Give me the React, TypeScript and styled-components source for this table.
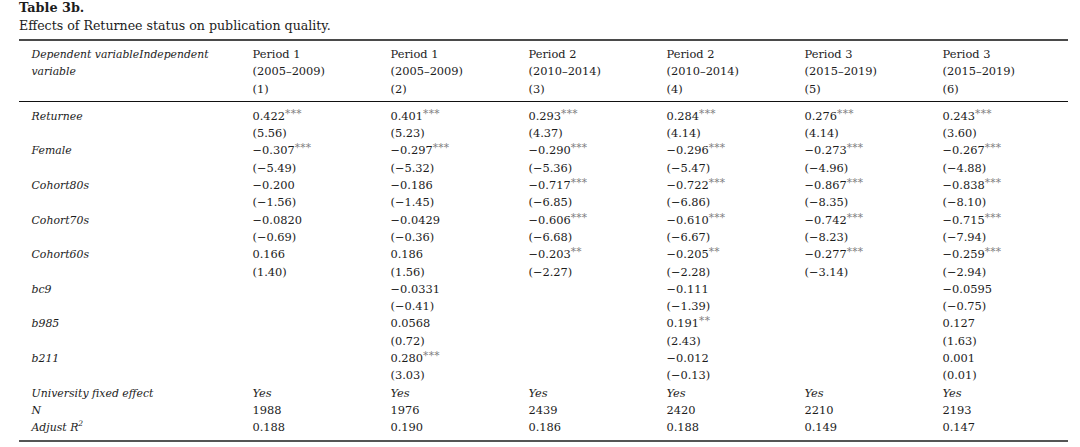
import React from "react";
import styled, { createGlobalStyle } from "styled-components";

const Global = createGlobalStyle`
  html, body { margin: 0; padding: 0; background: #fff; }
  body { font-family: "DejaVu Serif", serif; color: #1c1c1c; }
  *, *::before, *::after { box-sizing: border-box; }
`;

const Page = styled.div`
  padding: 0 12px 0 19px;
  width: 1080px;
`;

const Title = styled.div`
  font-weight: bold;
  font-size: 12.8px;
  line-height: 15px;
`;

const Caption = styled.div`
  font-size: 12.6px;
  line-height: 18px;
  margin-top: 2px;
`;

const Table = styled.table`
  margin-top: 4px;
  width: 1049px;
  border-collapse: collapse;
  border-top: 2px solid #4a4a4a;
  border-bottom: 2px solid #555;
  font-size: 11.4px;
  line-height: 17.3px;
  table-layout: fixed;
`;

const Col = styled.col<{ $first?: boolean }>`
  width: ${(p) => (p.$first ? "221px" : "138px")};
`;

const HeadRow = styled.tr`
  border-bottom: 1.5px solid #111;
`;

const Th = styled.th<{ $first?: boolean }>`
  text-align: left;
  font-weight: normal;
  font-style: ${(p) => (p.$first ? "italic" : "normal")};
  font-size: ${(p) => (p.$first ? "10.8px" : "11.4px")};
  vertical-align: top;
  padding: 5px 0 3px 12.5px;
  white-space: nowrap;
`;

const Td = styled.td<{ $label?: boolean; $top?: boolean; $bottom?: boolean }>`
  text-align: left;
  vertical-align: top;
  padding: ${(p) => (p.$top ? "6px" : "0")} 0 ${(p) => (p.$bottom ? "3px" : "0")} 12.5px;
  font-style: ${(p) => (p.$label ? "italic" : "normal")};
  font-size: ${(p) => (p.$label ? "10.9px" : "11.4px")};
  white-space: nowrap;
`;

const Line = styled.div`
  height: 17.3px;
`;

const Stars = styled.sup`
  color: #808080;
  font-size: 10.5px;
  vertical-align: 3px;
  line-height: 0;
  letter-spacing: 0.3px;
`;

const Sup = styled.sup`
  font-size: 7.5px;
  vertical-align: 5px;
  line-height: 0;
`;

const Yes = styled.span`
  font-style: italic;
`;

const headers: [string, string, string][] = [
  ["Period 1", "(2005–2009)", "(1)"],
  ["Period 1", "(2005–2009)", "(2)"],
  ["Period 2", "(2010–2014)", "(3)"],
  ["Period 2", "(2010–2014)", "(4)"],
  ["Period 3", "(2015–2019)", "(5)"],
  ["Period 3", "(2015–2019)", "(6)"],
];

const vars: { label: string; coef: string[]; t: string[] }[] = [
  {
    label: "Returnee",
    coef: ["0.422***", "0.401***", "0.293***", "0.284***", "0.276***", "0.243***"],
    t: ["(5.56)", "(5.23)", "(4.37)", "(4.14)", "(4.14)", "(3.60)"],
  },
  {
    label: "Female",
    coef: ["−0.307***", "−0.297***", "−0.290***", "−0.296***", "−0.273***", "−0.267***"],
    t: ["(−5.49)", "(−5.32)", "(−5.36)", "(−5.47)", "(−4.96)", "(−4.88)"],
  },
  {
    label: "Cohort80s",
    coef: ["−0.200", "−0.186", "−0.717***", "−0.722***", "−0.867***", "−0.838***"],
    t: ["(−1.56)", "(−1.45)", "(−6.85)", "(−6.86)", "(−8.35)", "(−8.10)"],
  },
  {
    label: "Cohort70s",
    coef: ["−0.0820", "−0.0429", "−0.606***", "−0.610***", "−0.742***", "−0.715***"],
    t: ["(−0.69)", "(−0.36)", "(−6.68)", "(−6.67)", "(−8.23)", "(−7.94)"],
  },
  {
    label: "Cohort60s",
    coef: ["0.166", "0.186", "−0.203**", "−0.205**", "−0.277***", "−0.259***"],
    t: ["(1.40)", "(1.56)", "(−2.27)", "(−2.28)", "(−3.14)", "(−2.94)"],
  },
  {
    label: "bc9",
    coef: ["", "−0.0331", "", "−0.111", "", "−0.0595"],
    t: ["", "(−0.41)", "", "(−1.39)", "", "(−0.75)"],
  },
  {
    label: "b985",
    coef: ["", "0.0568", "", "0.191**", "", "0.127"],
    t: ["", "(0.72)", "", "(2.43)", "", "(1.63)"],
  },
  {
    label: "b211",
    coef: ["", "0.280***", "", "−0.012", "", "0.001"],
    t: ["", "(3.03)", "", "(−0.13)", "", "(0.01)"],
  },
];

const Value = ({ v }: { v: string }) => {
  const m = v.match(/^(.*?)(\*+)$/);
  if (!m) return <>{v}</>;
  return (
    <>
      {m[1]}
      <Stars>{m[2]}</Stars>
    </>
  );
};

export default function App() {
  return (
    <Page>
      <Global />
      <Title>Table 3b.</Title>
      <Caption>Effects of Returnee status on publication quality.</Caption>
      <Table>
        <colgroup>
          <Col $first />
          {headers.map((_, i) => (
            <Col key={i} />
          ))}
        </colgroup>
        <thead>
          <HeadRow>
            <Th $first>
              Dependent variableIndependent
              <br />
              variable
            </Th>
            {headers.map((h, i) => (
              <Th key={i}>
                {h[0]}
                <br />
                {h[1]}
                <br />
                {h[2]}
              </Th>
            ))}
          </HeadRow>
        </thead>
        <tbody>
          {vars.map((r, ri) => (
            <tr key={r.label}>
              <Td $label $top={ri === 0}>
                <Line>{r.label}</Line>
              </Td>
              {r.coef.map((c, i) => (
                <Td key={i} $top={ri === 0}>
                  <Line>
                    <Value v={c} />
                  </Line>
                  <Line>{r.t[i]}</Line>
                </Td>
              ))}
            </tr>
          ))}
          <tr>
            <Td $label>
              <Line>University fixed effect</Line>
            </Td>
            {headers.map((_, i) => (
              <Td key={i}>
                <Line>
                  <Yes>Yes</Yes>
                </Line>
              </Td>
            ))}
          </tr>
          <tr>
            <Td $label>
              <Line>N</Line>
            </Td>
            {["1988", "1976", "2439", "2420", "2210", "2193"].map((n) => (
              <Td key={n}>
                <Line>{n}</Line>
              </Td>
            ))}
          </tr>
          <tr>
            <Td $label $bottom>
              <Line>
                Adjust R<Sup>2</Sup>
              </Line>
            </Td>
            {["0.188", "0.190", "0.186", "0.188", "0.149", "0.147"].map((n, i) => (
              <Td key={i} $bottom>
                <Line>{n}</Line>
              </Td>
            ))}
          </tr>
        </tbody>
      </Table>
    </Page>
  );
}
